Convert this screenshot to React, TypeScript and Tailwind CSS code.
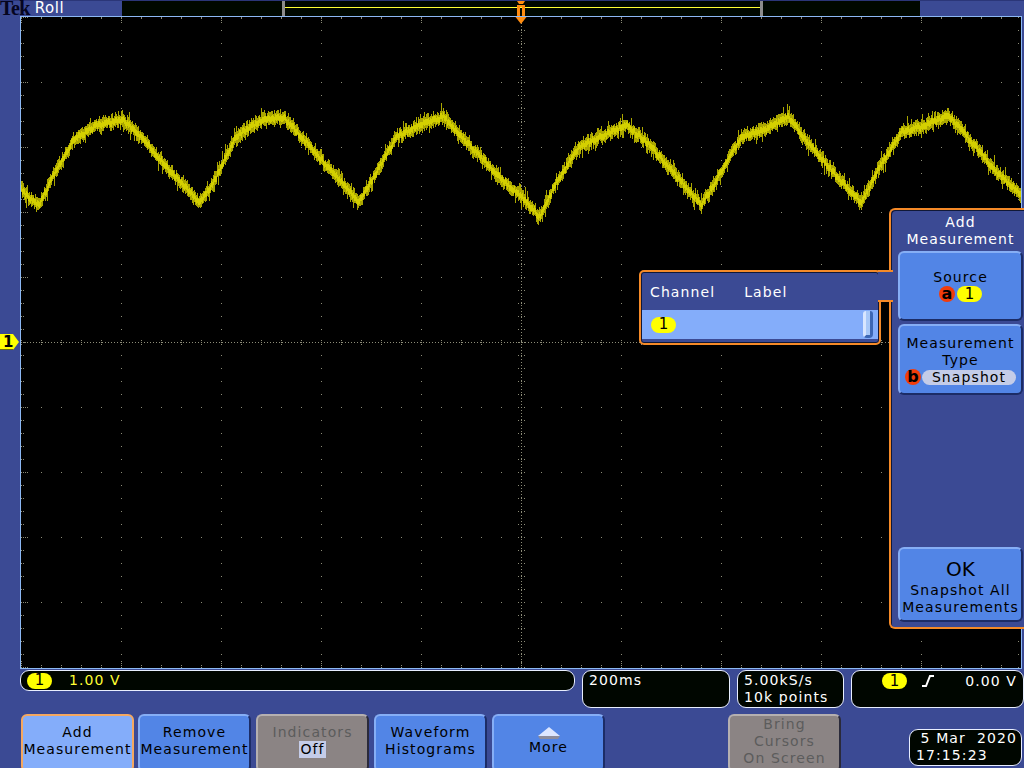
import React from "react"

const GW = 1000
const GH = 651

// peaks and troughs of the trace, in graticule coordinates
const trace: [number, number][] = [
  [0, 173], [8, 182], [18, 188], [32, 158], [52, 123], [75, 108], [102, 103], [122, 122], [145, 150], [178, 186],
  [195, 160], [214, 120], [238, 105], [262, 100], [285, 125], [315, 160], [338, 185],
  [355, 155], [375, 120], [400, 107], [422, 100], [445, 125], [480, 162], [505, 185], [518, 200],
  [535, 165], [558, 130], [585, 117], [605, 108], [630, 130], [660, 165], [680, 188],
  [698, 158], [720, 120], [745, 112], [767, 100], [790, 130], [820, 165], [840, 186],
  [858, 150], [880, 115], [905, 108], [927, 98], [950, 125], [975, 155], [1000, 178],
]

function traceAt(x: number) {
  for (let i = 1; i < trace.length; i++) {
    if (x <= trace[i][0]) {
      const [x0, y0] = trace[i - 1]
      const [x1, y1] = trace[i]
      return y0 + ((y1 - y0) * (x - x0)) / (x1 - x0)
    }
  }
  return trace[trace.length - 1][1]
}

function Waveform() {
  let seed = 12345
  const rnd = () => {
    seed = (seed * 16807) % 2147483647
    return seed / 2147483647
  }
  const outer: string[] = []
  const inner: string[] = []
  for (let x = 0; x < GW; x++) {
    const y = traceAt(x) + (rnd() - 0.5) * 4
    const up = 4 + rnd() * 4 + (rnd() > 0.8 ? rnd() * 6 : 0)
    const down = 4 + rnd() * 4 + (rnd() > 0.8 ? rnd() * 6 : 0)
    outer.push("M" + (x + 0.5) + " " + (y - up).toFixed(0) + "V" + (y + down).toFixed(0))
    inner.push("M" + (x + 0.5) + " " + (y - 3).toFixed(0) + "V" + (y + 3).toFixed(0))
  }
  return (
    <>
      <path d={outer.join("")} stroke="#aaa600" strokeWidth="1" fill="none" shapeRendering="crispEdges" />
      <path d={inner.join("")} stroke="#d4d000" strokeWidth="1" fill="none" shapeRendering="crispEdges" />
    </>
  )
}

function Graticule() {
  const dots: string[] = []
  const dot = (x: number, y: number) => dots.push("M" + x + " " + y + "h1v1h-1z")
  for (let i = 0; i <= 50; i++) {
    const x = i * 20
    for (let j = 0; j <= 50; j++) {
      const y = j * 13
      if (i % 5 === 0 || j % 5 === 0) dot(x, y)
    }
    // ticks on the top and bottom edge
    dot(x, 1)
    dot(x, GH - 3)
    if (i % 5 === 0) {
      dot(x, 3)
      dot(x, 5)
      dot(x, GH - 5)
      dot(x, GH - 7)
    }
  }
  for (let j = 0; j <= 50; j++) {
    const y = j * 13
    dot(2, y)
    if (j % 5 === 0) {
      dot(4, y)
      dot(6, y)
    }
    dot(GW - 3, y)
  }
  // centre cross
  for (let x = 0; x < GW; x += 3) dot(x, 325)
  for (let y = 0; y < GH; y += 3) dot(500, y)
  for (let i = 0; i <= 50; i++) {
    const x = i * 20
    dot(x, 323)
    dot(x, 327)
  }
  for (let j = 0; j <= 50; j++) {
    const y = j * 13
    dot(497, y)
    dot(503, y)
  }
  return <path d={dots.join("")} fill="#8c8c78" shapeRendering="crispEdges" />
}

function Badge() {
  return (
    <span className="inline-flex h-[16px] w-[25px] items-center justify-center rounded-full bg-[#ffff00] text-[15px] leading-none tracking-normal text-black">
      1
    </span>
  )
}

function Letter({ c }: { c: string }) {
  return (
    <span className="inline-flex h-[16px] w-[16px] items-center justify-center rounded-full bg-[#f23c0a] text-[16px] font-bold leading-none tracking-normal text-black">
      {c}
    </span>
  )
}

const btn = "rounded-[6px] border-2 border-t-[#86aef5] border-l-[#86aef5] border-r-[#1c2c66] border-b-[#1c2c66] bg-[#5285e6] text-black flex flex-col items-center text-center text-[14px] leading-[17px] tracking-[1.1px]"
const gray = "rounded-[6px] border-2 border-t-[#b5b0b0] border-l-[#b5b0b0] border-r-[#2a2a3a] border-b-[#2a2a3a] bg-[#8b8484] flex flex-col items-center text-center text-[14px] leading-[17px] tracking-[1.1px]"
const pill = "rounded-[9px] border border-[#e8eeff] bg-[#000600] pt-[1px] text-white text-[14px] leading-[17px] tracking-[1.1px]"

function SideMenu() {
  return (
    <div className="absolute left-[868px] top-[191px] flex h-[421px] w-[136px] flex-col rounded-l-[6px] border-y-2 border-l-2 border-[#f58a28] bg-[#3b4a94] pl-[7px] shadow-[inset_1px_1px_0_#101838]">
      <div className="mt-[4px] h-[37px] w-[125px] text-center text-[14px] leading-[17px] tracking-[1.1px] text-white">
        Add
        <br />
        Measurement
      </div>
      <div className={btn + " h-[70px] w-[125px] pt-[16px]"}>
        <span>Source</span>
        <span className="flex items-center gap-[2px]">
          <Letter c="a" />
          <Badge />
        </span>
      </div>
      <div className={btn + " mt-[3px] h-[71px] w-[125px] pt-[9px]"}>
        <span>Measurement</span>
        <span>Type</span>
        <span className="flex items-center gap-[1px]">
          <Letter c="b" />
          <span className="flex h-[15px] w-[94px] items-center justify-center rounded-full bg-[#c4cce8]">Snapshot</span>
        </span>
      </div>
      <div className={btn + " mt-auto mb-[5px] h-[75px] w-[125px] pt-[7px]"}>
        <span className="text-[20px] leading-[26px] tracking-normal">OK</span>
        <span>Snapshot All</span>
        <span>Measurements</span>
      </div>
    </div>
  )
}

function ChannelPopup() {
  return (
    <div className="absolute left-[618px] top-[253px] flex h-[75px] w-[242px] flex-col rounded-[5px] border-2 border-[#f58a28] bg-[#3b4a94] p-[1px] shadow-[inset_0_0_0_1px_#101838]">
      <div className="flex h-[37px] items-center gap-[29px] pl-[8px] pt-[2px] text-[14px] tracking-[1.1px] text-white">
        <span>Channel</span>
        <span>Label</span>
      </div>
      <div className="flex h-[29px] items-center justify-between bg-[#84adfa] pl-[9px] pr-[5px]">
        <Badge />
        <div className="h-[27px] w-[10px] rounded-b-[4px] rounded-t-[3px] border-x-[3px] border-b-[3px] border-l-[#d8e6ff] border-r-[#3c66b4] border-b-[#3c66b4] bg-[#a8c8f8]" />
      </div>
    </div>
  )
}

export default function App() {
  return (
    <div className="flex h-[768px] w-[1024px] flex-col overflow-hidden bg-[#3b4a94] font-['DejaVu_Sans',sans-serif]">
      <div className="relative z-10 flex h-4 border-t border-[#2b3678]">
        <div className="flex w-[122px] items-center">
          <span className="font-['Liberation_Serif',serif] text-[20px] font-bold leading-[15px] tracking-[-0.6px] text-[#050520]">Tek</span>
          <span className="ml-[5px] text-[15px] leading-[15px] tracking-[0.6px] text-white">Roll</span>
        </div>
        <div className="relative h-[15px] w-[798px] bg-[#000800]">
          <div className="absolute left-[160px] top-0 h-[15px] w-[481px] border-x-[3px] border-[#8c8c8c]">
            <div className="mt-[6px] h-[1px] bg-[#ffff33]" />
          </div>
          <svg className="absolute left-[391px] top-0 overflow-visible" width="16" height="24" viewBox="0 0 16 24">
            <path d="M4 0h8l-2 3H6z M4 4h8v11H9V6H7v9H4z" fill="#ff8c10" />
            <path d="M2.5 16h11L8 23z" fill="#ff8c10" />
          </svg>
        </div>
      </div>

      <div className="flex h-[653px]">
        <div className="w-5 pt-[317px]">
          <div className="relative h-[18px] w-5">
            <svg className="absolute inset-0" width="20" height="18" viewBox="0 0 20 18">
              <path d="M0 1h13l6 8-6 8H0z" fill="#ffff00" />
              <path d="M0 17h13l1-1H0z" fill="#6a6a10" />
            </svg>
            <span className="absolute left-[3px] top-0 text-[15px] font-bold leading-[18px] text-black">1</span>
          </div>
        </div>
        <div className="relative h-[653px] w-[1002px] border border-[#8cb8f4] bg-black">
          <svg width={GW} height={GH} viewBox={"0 0 " + GW + " " + GH} className="block">
            <Graticule />
            <Waveform />
          </svg>
          <ChannelPopup />
          <SideMenu />
          {/* joins the popup to the side menu */}
          <div className="absolute left-[857px] top-[253px] h-[32px] w-[15px] border-y-2 border-[#f58a28] bg-[#3b4a94]" />
        </div>
      </div>

      <div className="flex h-[38px] gap-[7px] pl-5 pt-[1px]">
        <div className={pill + " flex h-[21px] w-[555px] items-center gap-[17px] pl-[6px] !pt-0"}>
          <Badge />
          <span className="text-[#ffff33]">1.00 V</span>
        </div>
        <div className={pill + " h-[38px] w-[148px] pl-[6px]"}>200ms</div>
        <div className={pill + " h-[38px] w-[107px] pl-[6px]"}>
          5.00kS/s
          <br />
          10k points
        </div>
        <div className={pill + " flex h-[38px] w-[173px] items-start justify-between pl-[30px] pr-[6px] !pt-[2px]"}>
          <Badge />
          <svg width="14" height="14" viewBox="0 0 14 14" className="ml-[-9px] mt-[1px]">
            <path d="M1 12h4L9 2h4" stroke="white" strokeWidth="2" fill="none" />
          </svg>
          <span className="ml-[8px]">0.00 V</span>
        </div>
      </div>

      <div className="flex h-[61px] gap-[4px] pl-[21px] pt-[7px]">
        <div className="flex h-[58px] w-[113px] flex-col items-center rounded-[6px] border-2 border-[#f5a860] bg-[#84adfa] pt-[8px] text-center text-[14px] leading-[17px] tracking-[1.1px] text-black">
          <span>Add</span>
          <span>Measurement</span>
        </div>
        <div className={btn + " h-[58px] w-[113px] pt-[8px]"}>
          <span>Remove</span>
          <span>Measurement</span>
        </div>
        <div className={gray + " ml-[1px] h-[58px] w-[113px] pt-[8px] text-[#5c5c5c]"}>
          <span>Indicators</span>
          <span className="bg-[#c4cce8] px-[1px] text-black">Off</span>
        </div>
        <div className={btn + " ml-[1px] h-[58px] w-[113px] pt-[8px]"}>
          <span>Waveform</span>
          <span>Histograms</span>
        </div>
        <div className={btn + " ml-[1px] h-[58px] w-[113px] pt-[11px]"}>
          <svg width="24" height="12" viewBox="0 0 24 12">
            <path d="M12 0l11 9H1z" fill="#dce6ff" />
            <path d="M1 9h22l-2 3H3z" fill="#8c8c9c" />
          </svg>
          <span>More</span>
        </div>
        <div className={gray + " ml-[119px] h-[58px] w-[113px] text-[#5c5c5c]"}>
          <span>Bring</span>
          <span>Cursors</span>
          <span>On Screen</span>
        </div>
        <div className={pill + " ml-[64px] mt-[15px] h-[37px] w-[113px] pl-[6px] !pt-0"}>
          <div className="pr-[4px] text-right">5 Mar&nbsp;&nbsp;2020</div>
          <div>17:15:23</div>
        </div>
      </div>
    </div>
  )
}
